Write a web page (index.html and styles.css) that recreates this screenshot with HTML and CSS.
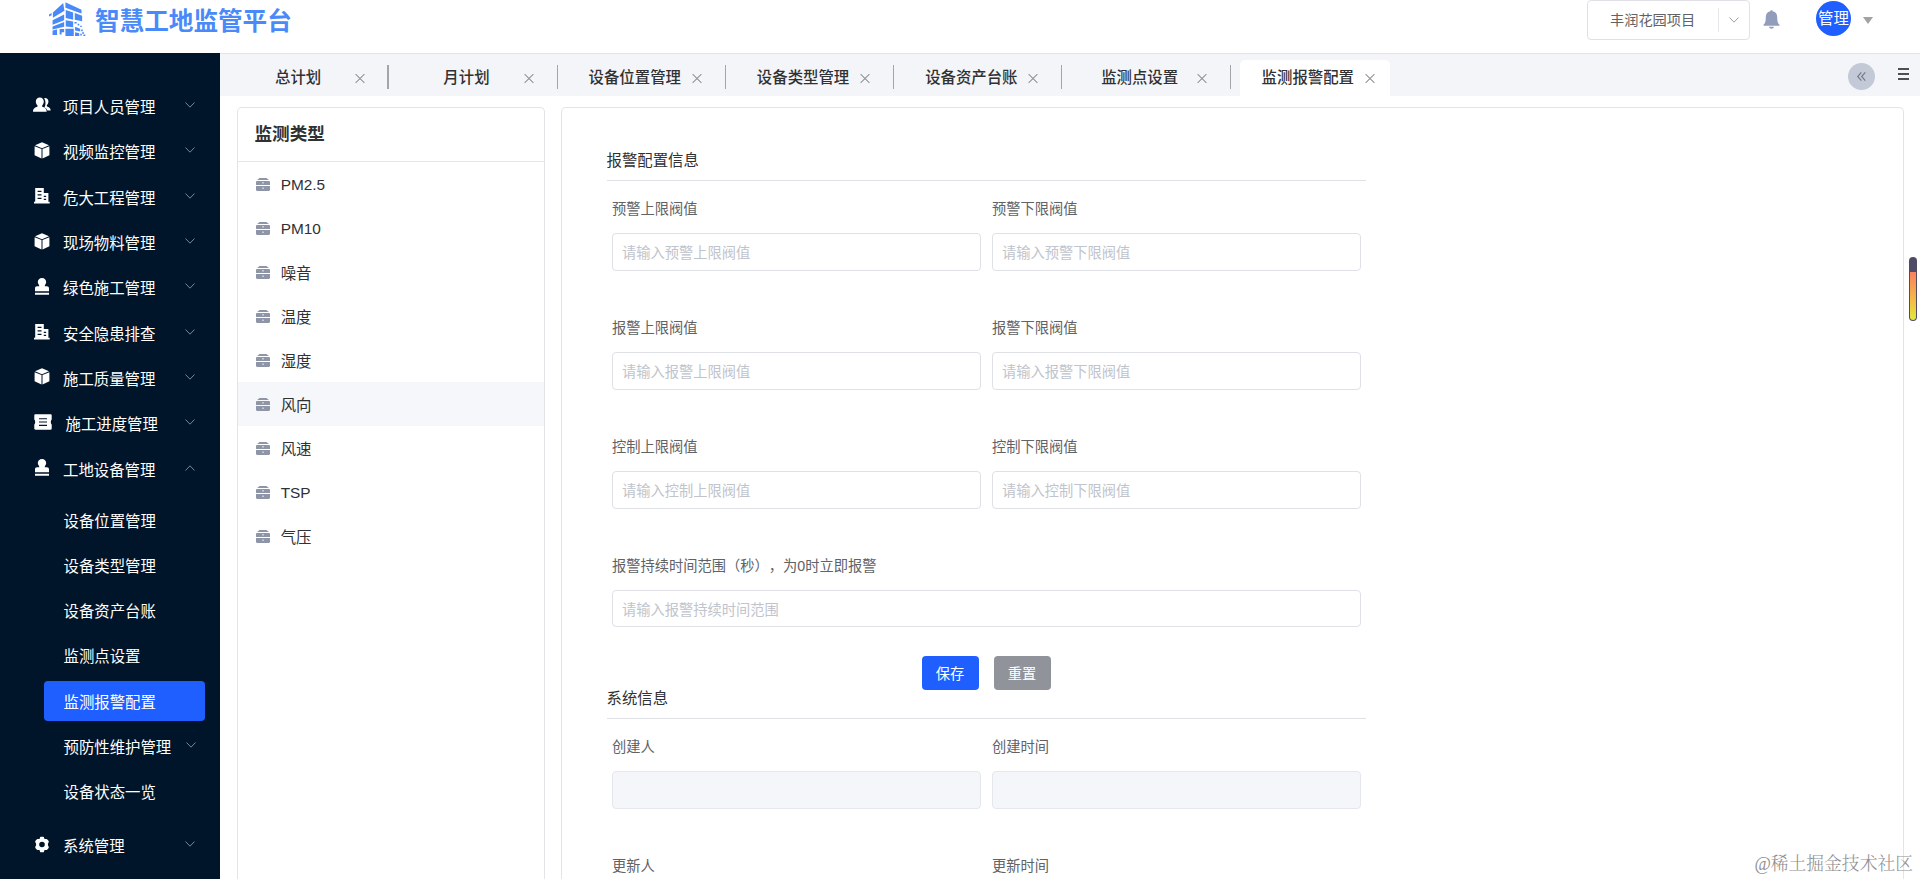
FILE: index.html
```html
<!DOCTYPE html>
<html lang="zh-CN">
<head>
<meta charset="utf-8">
<title>智慧工地监管平台</title>
<link rel="stylesheet" href="styles.css">
</head>
<body>
<svg class="defs" aria-hidden="true">
  <symbol id="i-users" viewBox="0 0 18 16"><path d="M11.2 1.2c2.3-.5 4.3.9 4.2 3.3 0 1.700-.7 2.700-1.500 3.600-.3.900 0 1.400.7 1.700 1.600.7 3 1.200 3.100 3.700h-3.300c-.4-1.700-1.600-2.400-3.100-3 1.400-2 1.800-6-.1-9.300z"/><path d="M6.800.5c2.500 0 4 1.700 4 4 0 1.800-.8 3.100-1.600 4-.4.900.1 1.300.8 1.600 2 .8 3.600 1.400 3.700 4.700H0c.1-3.300 1.700-3.900 3.600-4.700.8-.3 1.200-.7.900-1.600-.9-.9-1.700-2.200-1.700-4 0-2.300 1.500-4 4-4z"/></symbol>
  <symbol id="i-box" viewBox="0 0 16 17"><path d="M8 .3 15 3.200 8 6.200 1 3.200z"/><path d="M.6 4.200 7.500 7.100v9.500L.6 13.300z"/><path d="M15.400 4.200 8.500 7.100v9.500l6.900-3.300z"/></symbol>
  <symbol id="i-office" viewBox="0 0 16 16"><path fill-rule="evenodd" d="M1.200.5h8.600v5h4.600v8.700h1.300V16H0v-1.800h1.200zM3.600 3.200v1.300h3.900V3.200zm0 3.500V8h3.900V6.700zm0 3.500v1.300h3.900v-1.300zm6.200-2v1.300h2.300V8.200zm0 3v1.300h2.300v-1.300z"/></symbol>
  <symbol id="i-stamp" viewBox="0 0 16 17"><path d="M8 0c2.500 0 4.200 1.700 4.200 4 0 1.800-1.500 2.700-1.500 4.300h2.200c1.300 0 2.100.8 2.100 2.100v2.900H1v-2.900c0-1.300.8-2.100 2.100-2.100h2.200C5.300 6.700 3.800 5.800 3.800 4 3.800 1.700 5.500 0 8 0zM1 14.800h14v1.900H1z"/></symbol>
  <symbol id="i-ticket" viewBox="0 0 18 16"><path fill-rule="evenodd" d="M1.500.3h15c.8 0 1.200.4 1.200 1.200v4c-1.200.8-1.200 4.200 0 5v4c0 .8-.4 1.200-1.200 1.200h-15c-.8 0-1.200-.4-1.200-1.200v-4c1.200-.8 1.200-4.200 0-5v-4C.3.700.7.300 1.500.3zM5 4.200v1.100h8V4.200zm0 3.300v1.100h8V7.500zm0 3.300v1.100h8v-1.100z"/></symbol>
  <symbol id="i-gear" viewBox="0 0 16 16"><path fill-rule="evenodd" d="M6.200.6C6.500.1 9.500.1 9.800.6l.7 1.900 2 .1c.8-.1 2.600 2.400 2.300 3L13.900 7.200v1.600l.9 1.600c.3.600-1.500 3.100-2.300 3l-2 .1-.7 1.900c-.3.500-3.300.5-3.600 0l-.7-1.900-2-.1c-.8.100-2.600-2.400-2.300-3l.9-1.600V7.200L1.200 5.600c-.3-.600 1.500-3.100 2.300-3l2-.1zM8 5.200a2.800 2.800 0 1 0 0 5.600 2.800 2.800 0 0 0 0-5.600z"/></symbol>
  <symbol id="i-down" viewBox="0 0 10 6"><path d="M.5.500 5 5.200 9.500.5" fill="none" stroke="currentColor" stroke-width=".9"/></symbol>
  <symbol id="i-up" viewBox="0 0 10 6"><path d="M.5 5.500 5 .8l4.500 4.700" fill="none" stroke="currentColor" stroke-width=".9"/></symbol>
  <symbol id="i-x" viewBox="0 0 10 10"><path d="m.6.600 8.800 8.800m0-8.800L.6 9.400" fill="none" stroke="currentColor" stroke-width="1.100"/></symbol>
  <symbol id="i-drawer" viewBox="0 0 14 13"><path d="M3.500 0h7L12.800 2H1.200z"/><path fill-rule="evenodd" d="M1.200 2.900h11.600c.7 0 1.200.5 1.200 1.200v2.800H0V4.100c0-.7.500-1.200 1.200-1.200zm4.800 1.600v.8h2v-.8z"/><path fill-rule="evenodd" d="M0 8h14v3.800c0 .7-.5 1.200-1.200 1.200H1.200C.5 13 0 12.500 0 11.800zm6 1.800v.8h2v-.8z"/></symbol>
</svg>

<header class="header">
  <div class="brand">
    <svg class="logo" viewBox="146 2 118 112">
      <path d="M158 38 190 8l4 24-36 22zM146 44l8-5v7l-8 4zM197 6l50 23v12l-50-18zM198 30l23 8v22l-23-5zM226 39l23 9v17l-23-5zM157 62l36-18v18l-36 14zM157 81l36-14v15l-36 9zM198 62l23 4v18l-23-3zM157 94l14-3v17h-14zM179 89h14v10h-8v7h-6zM197 88h26v23h-26zM227 82l16 6v9l-16-3zM227 99l13 3v9h-13z"/>
      <path d="M225 67h7v5h-7zM235 73h5v5h-5zM243 79h5v4h-5zM246 91h5v5h-5zM249 99h6v5h-6zM243 104h5v5h-5zM253 106h6v5h-6z"/>
    </svg>
    <span class="brand-name">智慧工地监管平台</span>
  </div>
  <div class="tools">
    <div class="project"><span class="project-name">丰润花园项目</span><span class="project-arrow"><svg><use href="#i-down"/></svg></span></div>
    <svg class="bell" viewBox="0 0 17 19"><path d="M7.300 1.300C7.300-.2 9.700-.2 9.700 1.300c3.200.6 4.500 3 4.500 6 0 4 .7 6.300 2 7.200.5.400.5 1.200 0 1.200H.8c-.5 0-.5-.8 0-1.200 1.300-.9 2-3.200 2-7.200 0-3 1.300-5.400 4.500-6zM6 16.800h5c-.4 2.600-4.600 2.600-5 0z"/></svg>
    <div class="avatar">管理</div>
    <svg class="caret" viewBox="0 0 10 7"><path d="M0 0h10L5 7z"/></svg>
  </div>
</header>

<div class="layout">
  <nav class="sidebar">
    <a class="item"><svg class="ico"><use href="#i-users"/></svg><span>项目人员管理</span><svg class="chev"><use href="#i-down"/></svg></a>
    <a class="item"><svg class="ico"><use href="#i-box"/></svg><span>视频监控管理</span><svg class="chev"><use href="#i-down"/></svg></a>
    <a class="item"><svg class="ico"><use href="#i-office"/></svg><span>危大工程管理</span><svg class="chev"><use href="#i-down"/></svg></a>
    <a class="item"><svg class="ico"><use href="#i-box"/></svg><span>现场物料管理</span><svg class="chev"><use href="#i-down"/></svg></a>
    <a class="item"><svg class="ico"><use href="#i-stamp"/></svg><span>绿色施工管理</span><svg class="chev"><use href="#i-down"/></svg></a>
    <a class="item"><svg class="ico"><use href="#i-office"/></svg><span>安全隐患排查</span><svg class="chev"><use href="#i-down"/></svg></a>
    <a class="item"><svg class="ico"><use href="#i-box"/></svg><span>施工质量管理</span><svg class="chev"><use href="#i-down"/></svg></a>
    <a class="item wide"><svg class="ico"><use href="#i-ticket"/></svg><span>施工进度管理</span><svg class="chev"><use href="#i-down"/></svg></a>
    <a class="item"><svg class="ico"><use href="#i-stamp"/></svg><span>工地设备管理</span><svg class="chev"><use href="#i-up"/></svg></a>
    <div class="submenu">
      <a class="item sub"><span>设备位置管理</span></a>
      <a class="item sub"><span>设备类型管理</span></a>
      <a class="item sub"><span>设备资产台账</span></a>
      <a class="item sub"><span>监测点设置</span></a>
      <a class="item sub current"><span>监测报警配置</span></a>
      <a class="item sub"><span>预防性维护管理</span><svg class="chev"><use href="#i-down"/></svg></a>
      <a class="item sub"><span>设备状态一览</span></a>
    </div>
    <a class="item"><svg class="ico"><use href="#i-gear"/></svg><span>系统管理</span><svg class="chev"><use href="#i-down"/></svg></a>
  </nav>

  <main class="main">
    <div class="tabs">
      <div class="tab first"><span>总计划</span><svg><use href="#i-x"/></svg></div>
      <div class="tab"><span>月计划</span><svg><use href="#i-x"/></svg></div>
      <div class="tab"><span>设备位置管理</span><svg><use href="#i-x"/></svg></div>
      <div class="tab"><span>设备类型管理</span><svg><use href="#i-x"/></svg></div>
      <div class="tab"><span>设备资产台账</span><svg><use href="#i-x"/></svg></div>
      <div class="tab"><span>监测点设置</span><svg><use href="#i-x"/></svg></div>
      <div class="tab active"><span>监测报警配置</span><svg><use href="#i-x"/></svg></div>
      <div class="tab-tools">
        <div class="collapse"><svg viewBox="0 0 10 10"><path d="M4.800.5.800 5l4 4.500M9.200.5l-4 4.500 4 4.500"/></svg></div>
        <div class="burger"><i></i><i></i><i></i></div>
      </div>
    </div>

    <div class="panels">
      <section class="types">
        <h2>监测类型</h2>
        <ul>
          <li><svg><use href="#i-drawer"/></svg><span class="latin">PM2.5</span></li>
          <li><svg><use href="#i-drawer"/></svg><span class="latin">PM10</span></li>
          <li><svg><use href="#i-drawer"/></svg>噪音</li>
          <li><svg><use href="#i-drawer"/></svg>温度</li>
          <li><svg><use href="#i-drawer"/></svg>湿度</li>
          <li class="selected"><svg><use href="#i-drawer"/></svg>风向</li>
          <li><svg><use href="#i-drawer"/></svg>风速</li>
          <li><svg><use href="#i-drawer"/></svg><span class="latin">TSP</span></li>
          <li><svg><use href="#i-drawer"/></svg>气压</li>
        </ul>
      </section>

      <section class="config">
        <h3>报警配置信息</h3>
        <div class="grid">
          <div class="field"><label>预警上限阀值</label><div class="input">请输入预警上限阀值</div></div>
          <div class="field"><label>预警下限阀值</label><div class="input">请输入预警下限阀值</div></div>
          <div class="field"><label>报警上限阀值</label><div class="input">请输入报警上限阀值</div></div>
          <div class="field"><label>报警下限阀值</label><div class="input">请输入报警下限阀值</div></div>
          <div class="field"><label>控制上限阀值</label><div class="input">请输入控制上限阀值</div></div>
          <div class="field"><label>控制下限阀值</label><div class="input">请输入控制下限阀值</div></div>
          <div class="field full"><label>报警持续时间范围（秒），为0时立即报警</label><div class="input">请输入报警持续时间范围</div></div>
        </div>
        <div class="actions"><button class="btn primary">保存</button><button class="btn">重置</button></div>
        <h3 class="system">系统信息</h3>
        <div class="grid">
          <div class="field"><label>创建人</label><div class="input disabled"></div></div>
          <div class="field"><label>创建时间</label><div class="input disabled"></div></div>
          <div class="field last"><label>更新人</label></div>
          <div class="field last"><label>更新时间</label></div>
        </div>
      </section>
    </div>
  </main>
</div>

<div class="gauge"><div class="gauge-fill"></div></div>
<div class="watermark">@稀土掘金技术社区</div>
</body>
</html>
```
FILE: styles.css
```css
* { box-sizing: border-box; }

body {
  margin: 0;
  height: 879px;
  overflow: hidden;
  display: flex;
  flex-direction: column;
  background: #fff;
  color: #303133;
  font-family: "Liberation Sans", "Noto Sans CJK SC", sans-serif;
  font-size: 15.4px;
  text-spacing-trim: space-all;
}

h2, h3, ul { margin: 0; padding: 0; list-style: none; }
svg { display: block; fill: currentColor; flex: none; }
.defs { position: absolute; width: 0; height: 0; }

/* Header */
.header {
  flex: none;
  height: 53px;
  display: flex;
  justify-content: space-between;
  align-items: flex-start;
  padding: 0 47px 0 49px;
}
.brand { display: flex; align-items: flex-start; gap: 8px; color: #4a8af8; }
.logo { width: 38px; height: 36px; margin-top: 1px; }
.brand-name { font-size: 24.6px; font-weight: 700; line-height: 44px; white-space: nowrap; }
.tools { display: flex; align-items: flex-start; }
.project {
  width: 163px;
  height: 40px;
  margin-right: 13px;
  display: flex;
  align-items: center;
  border: 1px solid #dfe1e6;
  border-radius: 4px;
  color: #606266;
  font-size: 14.2px;
}
.project-name { width: 130px; padding: 0 0 2px 22px; }
.project-arrow {
  width: 31px;
  height: 24px;
  display: flex;
  align-items: center;
  justify-content: center;
  border-left: 1px solid #e4e7ed;
  color: #909399;
}
.project-arrow svg { width: 10px; height: 6px; }
.bell { width: 17px; height: 19px; margin: 10px 36px 0 0; color: #929cbb; }
.avatar {
  width: 35px;
  height: 35px;
  margin: 1px 12px 0 0;
  border-radius: 50%;
  background: #1f5fff;
  color: #fff;
  text-align: center;
  line-height: 35px;
  white-space: nowrap;
}
.caret { width: 10px; height: 7px; margin-top: 17px; color: #a0a2a6; }

/* Sidebar */
.layout { flex: 1; min-height: 0; display: flex; }
.sidebar { flex: none; width: 220px; padding-top: 30.5px; background: #001529; color: #fff; }
.item {
  height: 45.3px;
  padding: 0 25px 0 34px;
  display: flex;
  align-items: center;
  white-space: nowrap;
}
.ico { width: 16px; height: 17px; margin-right: 13px; transform: translateY(-1px); }
.item:first-child .ico { width: 18px; height: 16px; margin: 0 12px 0 -1px; }
.wide .ico { width: 18px; height: 16px; margin-right: 13.5px; }
.chev { width: 10px; height: 6px; margin-left: auto; color: #8994a0; transform: translateY(-1px); }
.submenu { padding: 5.7px 0 8.7px; }
.sub { padding-left: 63.5px; padding-right: 24px; }
.current { height: 40px; margin: 2.65px 15px 2.65px 44px; padding-left: 19.5px; border-radius: 4px; background: #1f5fff; }

/* Tabs */
.main { flex: 1; min-width: 0; display: flex; flex-direction: column; }
.tabs {
  flex: none;
  height: 43px;
  display: flex;
  align-items: flex-start;
  background: #f3f5f9;
  border-top: 1px solid #e1e4e8;
  font-weight: 500;
}
.tab {
  position: relative;
  width: 168.3px;
  height: 36px;
  margin-top: 6px;
  padding: 0 23px 0 21px;
  display: flex;
  align-items: center;
  white-space: nowrap;
}
.tab span { flex: 1; text-align: center; transform: translateY(-2px); }
.tab svg { width: 10px; height: 10px; color: #909399; transform: translateY(.5px); }
.tab:not(.active)::after {
  content: "";
  position: absolute;
  right: -1px;
  top: 5px;
  width: 1px;
  height: 24px;
  background: #a3a5aa;
}
.tab.first::after { width: 2px; }
.tab.active { width: 150px; margin-left: 10px; padding: 0 15px 0 11px; border-radius: 5px 5px 0 0; background: #fff; }
.tab-tools { margin-left: auto; padding: 9px 11px 0 0; display: flex; align-items: flex-start; gap: 23px; }
.collapse {
  width: 27px;
  height: 27px;
  display: flex;
  align-items: center;
  justify-content: center;
  border-radius: 50%;
  background: #c3c9d6;
}
.collapse svg { width: 9px; height: 9px; fill: none; stroke: #737985; stroke-width: 1.3; }
.burger { display: flex; flex-direction: column; gap: 3px; padding-top: 5px; }
.burger i { width: 11px; height: 2px; background: #4c4f54; }

/* Panels */
.panels { flex: 1; min-height: 0; padding: 11px 16px 0 17px; display: flex; gap: 16px; }
.types, .config { border: 1px solid #e2e4e8; border-bottom: 0; border-radius: 5px 5px 0 0; background: #fff; }
.types { flex: none; width: 308px; }
.types h2 {
  height: 54px;
  padding-left: 16.5px;
  border-bottom: 1px solid #e4e6ea;
  font-size: 17.6px;
  font-weight: 700;
  line-height: 52px;
}
.types li { height: 44px; padding-left: 18px; display: flex; align-items: center; gap: 10.7px; }
.types li svg { width: 14px; height: 13px; color: #8d95a6; }
.types .selected { background: #f5f7fa; }
.latin { padding-top: 2px; }

.config { flex: 1; padding: 32px 0 0 45px; }
.config h3 {
  width: 759px;
  height: 41px;
  border-bottom: 1px solid #dfe1e5;
  font-size: 15.4px;
  font-weight: 400;
  line-height: 41px;
  text-indent: -.5px;
}
.config .system { margin-top: -12px; }
.grid {
  width: 749px;
  margin-left: 5px;
  display: grid;
  grid-template-columns: 369px 369px;
  column-gap: 11px;
  row-gap: 29px;
}
.field { padding-top: 17px; color: #606266; font-size: 14.25px; }
.field label { display: block; height: 35px; line-height: 23px; }
.last label { height: 24px; }
.full { grid-column: 1 / -1; }
.input {
  height: 38px;
  padding-left: 9px;
  border: 1px solid #dfe1e6;
  border-radius: 4px;
  color: #c0c4cc;
  line-height: 38px;
}
.full .input { height: 37px; }
.disabled { background: #f4f6fa; border-color: #e4e7ed; }
.actions { height: 34px; margin: 29px 0 0 315px; display: flex; gap: 15px; }
.btn {
  width: 57px;
  height: 34px;
  padding: 0 1px 2px 0;
  border: 0;
  border-radius: 4px;
  background: #909399;
  color: #fff;
  font: inherit;
  font-size: 14.25px;
}
.primary { background: #1f5fff; }

/* Overlays */
.gauge {
  position: absolute;
  left: 1909px;
  top: 257px;
  width: 8px;
  height: 64px;
  padding: 15px 1px 1px;
  border-radius: 4px;
  background: #4d4b66;
}
.gauge-fill { height: 48px; border-radius: 0 0 3px 3px; background: linear-gradient(#f9805f, #f2bd45 60%, #e1e83e); }
.watermark {
  position: absolute;
  right: 7px;
  bottom: 2px;
  color: #8f8f8f;
  font-family: "Liberation Serif", "Noto Serif CJK SC", "Noto Sans CJK SC", serif;
  font-size: 17.8px;
  font-weight: 300;
  line-height: 26px;
}
```
